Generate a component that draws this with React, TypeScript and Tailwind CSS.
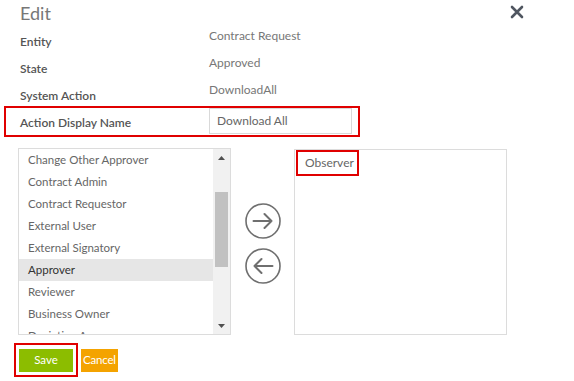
import React from 'react';

const roles = [
  'Change Other Approver',
  'Contract Admin',
  'Contract Requestor',
  'External User',
  'External Signatory',
  'Approver',
  'Reviewer',
  'Business Owner',
  'Deviating Approver',
];

const ArrowCircle: React.FC<{ dir: 'right' | 'left' }> = ({ dir }) => (
  <svg width="36" height="36" viewBox="0 0 36 36" fill="none">
    <circle cx="18" cy="18" r="17" stroke="#6f6f6f" strokeWidth="1.6" />
    {dir === 'right' ? (
      <path d="M8.5 18h18M19.5 11l7 7-7 7" stroke="#6f6f6f" strokeWidth="2" strokeLinecap="round" strokeLinejoin="round" />
    ) : (
      <path d="M27.5 18h-18M16.5 11l-7 7 7 7" stroke="#6f6f6f" strokeWidth="2" strokeLinecap="round" strokeLinejoin="round" />
    )}
  </svg>
);

const App: React.FC = () => {
  return (
    <div className="relative w-[574px] h-[381px] bg-white text-[12px] overflow-hidden" style={{ fontFamily: 'Lato, "Open Sans", sans-serif' }}>
      {/* close */}
      <button className="absolute left-[509px] top-[4px] w-[15px] h-[15px] flex items-center justify-center">
        <svg width="14" height="14" viewBox="0 0 14 14">
          <path d="M2 2l10 10M12 2L2 12" stroke="#4f5660" strokeWidth="2.6" strokeLinecap="round" />
        </svg>
      </button>

      <h1 className="pl-[20px] pt-[1px] h-[27px] text-[18px] leading-[24px] text-[#777]">Edit</h1>

      {/* details */}
      <div className="flex flex-col">
        <div className="flex h-[27px] pl-[20px]">
          <span className="w-[189px] pt-[6px] leading-[18px] font-semibold text-[#555]">Entity</span>
          <span className="leading-[18px] text-[#777]">Contract Request</span>
        </div>
        <div className="flex h-[27px] pl-[20px]">
          <span className="w-[189px] pt-[6px] leading-[18px] font-semibold text-[#555]">State</span>
          <span className="leading-[18px] text-[#777]">Approved</span>
        </div>
        <div className="flex h-[25px] pl-[20px]">
          <span className="w-[189px] pt-[6px] leading-[18px] font-semibold text-[#555]">System Action</span>
          <span className="leading-[18px] text-[#777]">DownloadAll</span>
        </div>
        <div className="ml-[4px] w-[356px] h-[31px] border-2 border-[#e00000] flex pl-[14px]">
          <span className="w-[189px] pt-[6px] leading-[18px] font-semibold text-[#555]">Action Display Name</span>
          <div className="w-[143px] h-[26px] border border-[#d9d9d9] pl-[7px] flex items-center text-[#666]">Download All</div>
        </div>
      </div>

      {/* lists */}
      <div className="flex mt-[11px] ml-[18px]">
        <div className="w-[213px] h-[187px] border border-[#dcdcdc] flex overflow-hidden">
          <ul className="flex-1 text-[11.5px]">
            {roles.map((r) => (
              <li
                key={r}
                className={`h-[22px] pl-[9px] leading-[22px] whitespace-nowrap ${r === 'Approver' ? 'bg-[#e6e6e6] text-[#333]' : 'text-[#666]'}`}
              >
                {r}
              </li>
            ))}
          </ul>
          <div className="w-[17px] bg-[#f1f1f1] flex flex-col items-center">
            <div className="h-[17px] flex items-center justify-center">
              <svg width="7" height="4" viewBox="0 0 7 4"><path d="M3.5 0L7 4H0z" fill="#505050" /></svg>
            </div>
            <div className="mt-[26px] w-[13px] h-[75px] bg-[#c1c1c1]" />
            <div className="flex-1" />
            <div className="h-[17px] flex items-center justify-center">
              <svg width="7" height="4" viewBox="0 0 7 4"><path d="M0 0h7L3.5 4z" fill="#505050" /></svg>
            </div>
          </div>
        </div>

        <div className="w-[63px] flex flex-col items-center pt-[55px] gap-[9px]">
          <ArrowCircle dir="right" />
          <ArrowCircle dir="left" />
        </div>

        <div className="mt-[1px] w-[213px] h-[186px] border border-[#dcdcdc] pl-[1px]">
          <div className="w-[63px] h-[26px] border-2 border-[#e00000] pl-[7px] leading-[22px] text-[#666]">Observer</div>
        </div>
      </div>

      {/* actions */}
      <div className="flex items-center mt-[8px] ml-[14px] gap-[3px] text-[11.5px]">
        <div className="w-[64px] h-[34px] border-2 border-[#e00000] flex items-center justify-center">
          <button className="w-[54px] h-[23px] bg-[#8cbd00] text-white">Save</button>
        </div>
        <button className="w-[37px] h-[23px] bg-[#f4a300] text-white tracking-[-0.2px]">Cancel</button>
      </div>
    </div>
  );
};

export default App;
